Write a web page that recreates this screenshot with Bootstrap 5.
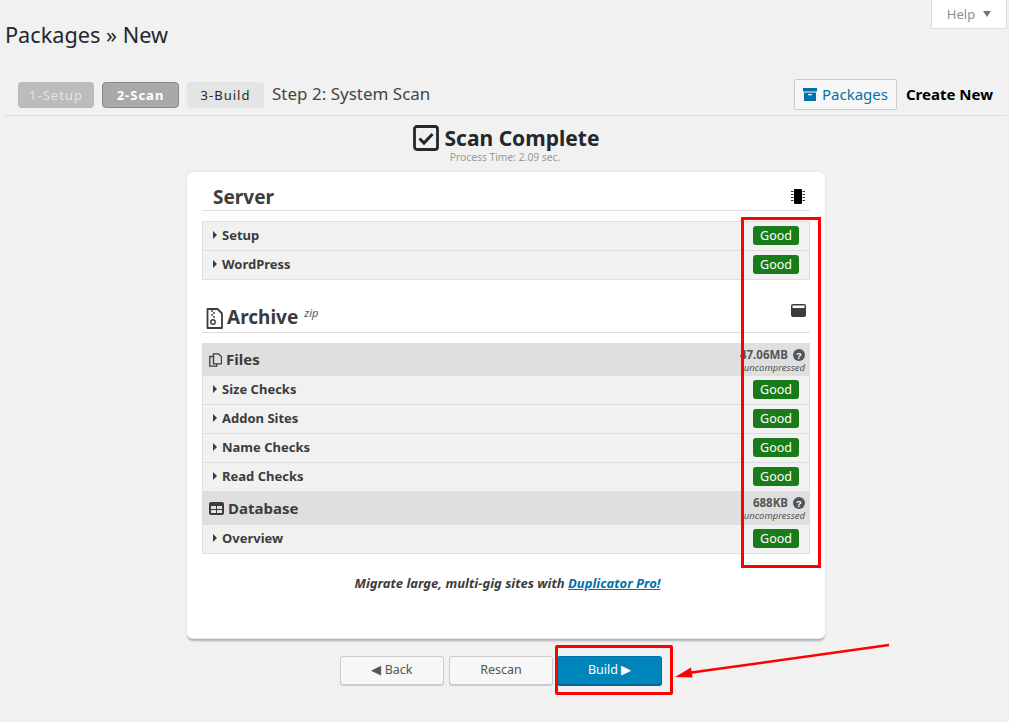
<!DOCTYPE html>
<html lang="en">
<head>
<meta charset="utf-8">
<title>Packages New</title>
<link href="https://cdn.jsdelivr.net/npm/bootstrap@5.3.0/dist/css/bootstrap.min.css" rel="stylesheet">
<style>
html,body{height:722px;overflow:hidden}
body{background:#f1f1f1;font-family:"Noto Sans","Open Sans",sans-serif;color:#23282d;position:relative;font-size:13px}
.help-wrap{height:28px;padding-right:2px}
.help-tab{width:76px;height:29px;background:#fff;border:1px solid #ddd;border-top:0;color:#8a8f94;font-size:13px;gap:8px;padding-top:1px}
.help-tab i{width:0;height:0;border-left:4.5px solid transparent;border-right:4.5px solid transparent;border-top:6px solid #72777c;margin-bottom:2px}
.page-title{font-size:21.7px;font-weight:400;line-height:30px;margin:-8px 0 0 5px;color:#23282d}
.head-bar{height:38px;margin:28px 2px 0 4px;border-bottom:1px solid #ddd;padding:0 14px 4px 14px}
.step{height:26px;border-radius:4px;font-size:13px;letter-spacing:1px;width:76px;line-height:26px}
.step-1{background:#bcbcbc;color:#e3e3e3;margin-right:8px}
.step-2{background:#aba8a9;color:#fff;font-weight:700;border:1px solid #8b8689;width:77px;line-height:24px;margin-right:8px}
.step-3{background:#e3e4e4;color:#23282d;width:77px}
.step-label{font-size:17px;margin-left:8px;margin-top:-2px;color:#444;line-height:26px}
.btn-pack{height:31px;width:103px;border:1px solid #ccc;border-radius:2px;background:#f7f7f7;color:#0073aa;font-size:15px;gap:5px;margin-right:10px}
.create-new{color:#000;font-weight:700;font-size:15px;margin-left:-1px}
.scan-head{height:56px;padding-top:7px;padding-left:3px}
.scan-title{font-size:21px;font-weight:700;line-height:30px;gap:6px;color:#23282d}
.scan-time{font-size:10.3px;color:#999;line-height:11px;margin-top:-1px;margin-left:-2px}
.panel{width:638px;height:466px;margin:0 0 0 187px;background:#fff;border-radius:6px;box-shadow:0 0 0 1px #e8e8e8,0 3px 2px 0 #b0b0b0;padding:0 15px}
.sec-head{border-bottom:1px solid #ddd;padding:0 5px 0 11px}
.sec-server{height:39px;padding-top:11px}
.sec-archive{height:29px;margin-top:24px;padding:0 4px}
.sec-name{font-size:19px;font-weight:700;color:#3c3c3c;line-height:28px}
.zip-tag{font-size:11px;font-style:italic;font-weight:400;color:#555;position:relative;top:-7px;margin-left:1px}
.rows{border:1px solid #e0e0e0;background:#f1f1f1}
.rows-server{margin-top:10px}
.rows-archive{margin-top:10px;border-top:0}
.row-item{height:29px;border-bottom:1px solid #ddd;padding:0 10px 0 10px;font-weight:700;font-size:13px;color:#3c3c3c;gap:5px}
.row-item:last-child{border-bottom:0;height:28px}
.row-tail{height:28px}
.tri{width:0;height:0;border-top:4.5px solid transparent;border-bottom:4.5px solid transparent;border-left:4.5px solid #3c3c3c;margin-bottom:2px}
.good-tag{width:46px;height:19px;background:#197b19;color:#fff;border-radius:3px;font-weight:400;font-size:12.5px;line-height:19px;text-align:center;margin-top:-1px}
.group-head{background:#dfdfdf;padding:0 5px 0 7px;color:#3c3c3c}
.gh-files{height:33px;border-radius:3px 3px 0 0;margin:0 -1px}
.gh-db{height:34px;margin:0 -1px}
.gh-name{font-size:15px;font-weight:700;gap:4px}
.size-col{text-align:right;line-height:10px;width:70px;padding-top:2px}
.size-val{font-size:11.5px;font-weight:700;color:#555;gap:5px;line-height:12px;white-space:nowrap}
.size-note{font-size:9.5px;font-style:italic;font-weight:400;color:#555;white-space:nowrap;margin-top:2px}
.promo{font-size:13px;font-style:italic;font-weight:700;color:#3c3c3c;text-align:center;margin-top:20px;padding-left:3px;line-height:18px}
.promo a{color:#0073aa}
.actions{margin-top:18px;gap:5px;padding-left:340px}
.act{width:104px;height:29px;border:1px solid #ccc;border-radius:3px;background:#f7f7f7;color:#555;font-size:12.5px;box-shadow:0 1px 0 #ccc;gap:4px;padding:0}
.act.go{background:#0085ba;border-color:#0073aa #006799 #006799;color:#fff;width:105px;margin-left:-1px;box-shadow:0 1px 0 #006799}
.mark-box{position:absolute;border:3px solid #f00;pointer-events:none}
.box-good{left:741px;top:217px;width:80px;height:351px}
.box-build{left:555px;top:645px;width:118px;height:50px;border-radius:2px}
.mark-arrow{position:absolute;left:670px;top:640px;width:225px;height:45px}
</style>
</head>
<body>
<div class="help-wrap d-flex justify-content-end">
  <div class="help-tab d-flex align-items-center justify-content-center">Help <i></i></div>
</div>
<h1 class="page-title">Packages » New</h1>
<div class="head-bar d-flex align-items-center justify-content-between">
  <div class="d-flex align-items-center">
    <div class="step step-1 text-center">1-Setup</div>
    <div class="step step-2 text-center">2-Scan</div>
    <div class="step step-3 text-center">3-Build</div>
    <div class="step-label">Step 2: System Scan</div>
  </div>
  <div class="d-flex align-items-center">
    <div class="btn-pack d-flex align-items-center justify-content-center">
      <svg width="14" height="13" viewBox="0 0 14 13"><path fill="#0073aa" d="M0 0h14v3.5H0zM1 4.5h12V13H1zM5 6v1.3h4V6z" fill-rule="evenodd"/></svg>
      Packages
    </div>
    <div class="create-new">Create New</div>
  </div>
</div>
<div class="scan-head text-center d-flex flex-column align-items-center">
  <div class="scan-title d-flex align-items-center">
    <svg width="26" height="26" viewBox="0 0 26 26"><rect x="1.500" y="1.500" width="23" height="23" rx="2.500" fill="none" stroke="#23282d" stroke-width="2.800"/><path d="M6.500 13.500l4.500 4.500 8.500-9" fill="none" stroke="#23282d" stroke-width="3"/></svg>
    Scan Complete
  </div>
  <div class="scan-time">Process Time: 2.09 sec.</div>
</div>
<div class="panel">
  <div class="sec-head sec-server d-flex justify-content-between align-items-center">
    <span class="sec-name">Server</span>
    <svg width="14" height="15" viewBox="0 0 14 15"><rect x="3" y="0" width="8" height="15" rx="1" fill="#000"/><path d="M0 2.500h2.500M0 5.500h2.500M0 8.500h2.500M0 11.500h2.500M11.500 2.500H14M11.500 5.500H14M11.500 8.500H14M11.500 11.500H14" stroke="#333" stroke-width="1"/></svg>
  </div>
  <div class="rows rows-server">
    <div class="row-item d-flex align-items-center"><span class="tri"></span>Setup<span class="good-tag ms-auto">Good</span></div>
    <div class="row-item d-flex align-items-center"><span class="tri"></span>WordPress<span class="good-tag ms-auto">Good</span></div>
  </div>
  <div class="sec-head sec-archive d-flex justify-content-between align-items-center">
    <span class="sec-name d-flex align-items-center gap-1">
      <svg width="17" height="21" viewBox="0 0 17 21"><path d="M1.500 1h10l4.500 4.500V20H1.500z" fill="#fff" stroke="#3c3c3c" stroke-width="1.800" stroke-linejoin="round"/><path d="M6 2v2M8 4v2M6 6v2M8 8v2" stroke="#3c3c3c" stroke-width="1.400"/><circle cx="7" cy="14" r="2.200" fill="none" stroke="#3c3c3c" stroke-width="1.400"/></svg>
      <span>Archive <span class="zip-tag">zip</span></span>
    </span>
    <svg width="15" height="13" viewBox="0 0 15 13" class="mb-3"><rect width="15" height="13" rx="2" fill="#3c3c3c"/><rect x="1.500" y="1.500" width="12" height="2.500" fill="#fff"/></svg>
  </div>
  <div class="rows rows-archive">
    <div class="group-head gh-files d-flex justify-content-between align-items-center">
      <span class="gh-name d-flex align-items-center">
        <svg width="13" height="14" viewBox="0 0 13 14"><path d="M4.500.8h5l3 3v7h-8zM4.500 3.500H.8v9.700h7v-2.500" fill="none" stroke="#3c3c3c" stroke-width="1.300"/></svg>
        Files
      </span>
      <div class="size-col">
        <div class="size-val d-flex justify-content-end align-items-center">47.06MB <svg width="12" height="12" viewBox="0 0 12 12"><circle cx="6" cy="6" r="6" fill="#555"/><text x="6" y="9.500" font-size="9.500" font-weight="700" fill="#fff" text-anchor="middle" font-family="Liberation Sans">?</text></svg></div>
        <div class="size-note">uncompressed</div>
      </div>
    </div>
    <div class="row-item d-flex align-items-center"><span class="tri"></span>Size Checks<span class="good-tag ms-auto">Good</span></div>
    <div class="row-item d-flex align-items-center"><span class="tri"></span>Addon Sites<span class="good-tag ms-auto">Good</span></div>
    <div class="row-item d-flex align-items-center"><span class="tri"></span>Name Checks<span class="good-tag ms-auto">Good</span></div>
    <div class="row-item row-tail d-flex align-items-center border-0"><span class="tri"></span>Read Checks<span class="good-tag ms-auto">Good</span></div>
    <div class="group-head gh-db d-flex justify-content-between align-items-center">
      <span class="gh-name d-flex align-items-center">
        <svg width="15" height="13" viewBox="0 0 15 13"><rect width="15" height="13" rx="2" fill="#3c3c3c"/><path d="M2 4h5v3H2zM8 4h5v3H8zM2 8h5v3H2zM8 8h5v3H8z" fill="#dfdfdf"/></svg>
        Database
      </span>
      <div class="size-col">
        <div class="size-val d-flex justify-content-end align-items-center">688KB <svg width="12" height="12" viewBox="0 0 12 12"><circle cx="6" cy="6" r="6" fill="#555"/><text x="6" y="9.500" font-size="9.500" font-weight="700" fill="#fff" text-anchor="middle" font-family="Liberation Sans">?</text></svg></div>
        <div class="size-note">uncompressed</div>
      </div>
    </div>
    <div class="row-item d-flex align-items-center"><span class="tri"></span>Overview<span class="good-tag ms-auto">Good</span></div>
  </div>
  <div class="promo">Migrate large, multi-gig sites with <a href="#">Duplicator Pro!</a></div>
</div>
<div class="actions d-flex">
  <div class="act d-flex align-items-center justify-content-center">◀ Back</div>
  <div class="act d-flex align-items-center justify-content-center">Rescan</div>
  <div class="act go d-flex align-items-center justify-content-center">Build ▶</div>
</div>
<div class="mark-box box-good"></div>
<div class="mark-box box-build"></div>
<svg class="mark-arrow" viewBox="0 0 225 45"><path d="M219 5L18 33" stroke="#f00" stroke-width="2.500" fill="none"/><path d="M5 37L21 27.500l1.500 10z" fill="#f00"/></svg>
<script src="https://cdn.jsdelivr.net/npm/bootstrap@5.3.0/dist/js/bootstrap.bundle.min.js"></script>
</body>
</html>
